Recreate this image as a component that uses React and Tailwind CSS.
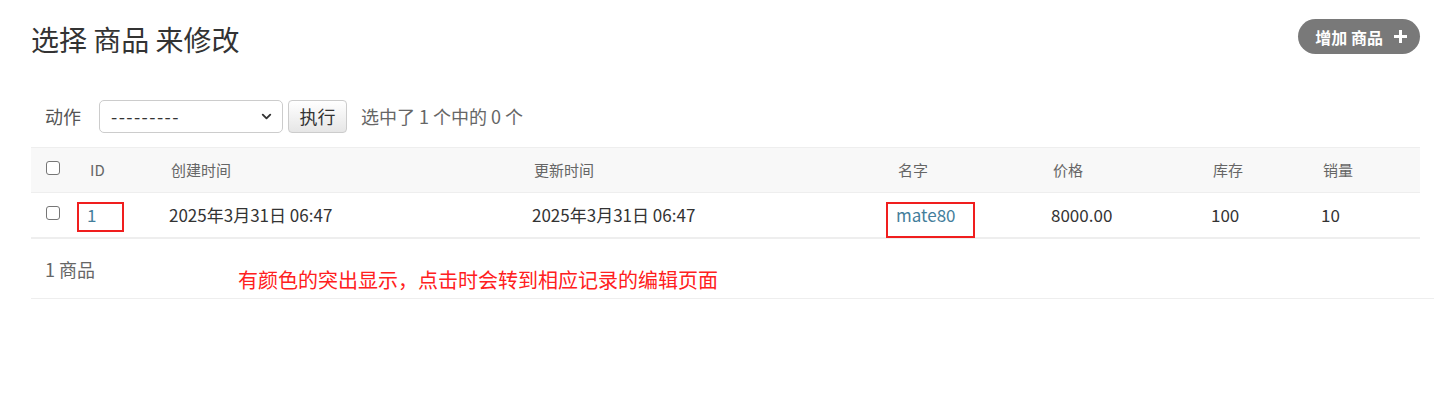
import React from 'react';
import { ChevronDown } from 'lucide-react';

const font = { fontFamily: '"Noto Sans CJK SC", "Liberation Sans", sans-serif' };

function Checkbox() {
  return <span className="block w-[14px] h-[14px] mb-[4px] border border-[#767676] rounded-[3px] bg-white"></span>;
}

const headers = ['ID', '创建时间', '更新时间', '名字', '价格', '库存', '销量'];

export default function App() {
  return (
    <div className="bg-white w-[1434px] h-[418px] text-[#333]" style={font}>
      {/* header */}
      <div className="flex items-start justify-between pl-[31px] pr-[14px] pt-[19px]">
        <h1 className="text-[28px] leading-[42px] font-normal text-[#333] -mt-[1px]">选择 商品 来修改</h1>
        <a className="flex items-center gap-[11px] h-[35px] pl-[17px] pr-[13px] rounded-full bg-[#797979] text-white text-[16px] font-semibold">
          增加 商品
          <svg width="13" height="13" viewBox="0 0 13 13">
            <path d="M6.5 0v13M0 6.5h13" stroke="white" strokeWidth="3" />
          </svg>
        </a>
      </div>

      {/* actions */}
      <div className="flex items-center mt-[40px] pl-[45px] h-[33px] text-[18px]">
        <span className="text-[#555]">动作</span>
        <div className="ml-[18px] flex items-center justify-between w-[184px] h-[33px] border border-[#ccc] rounded-[5px] pl-[11px] pr-[8px] text-[#333]">
          <span className="tracking-[1.4px]">---------</span>
          <ChevronDown className="w-[15px] h-[15px]" strokeWidth={3} />
        </div>
        <button className="ml-[5px] h-[33px] w-[59px] border border-[#ccc] rounded-[4px] bg-gradient-to-b from-white to-[#e6e6e6] text-[#333]">执行</button>
        <span className="ml-[14px] text-[#666]">选中了 1 个中的 0 个</span>
      </div>

      {/* table */}
      <div className="pl-[31px] pr-[14px] mt-[14px]">
        <table className="w-[1389px] table-fixed border-collapse">
          <colgroup>
            <col className="w-[48px]" />
            <col className="w-[82px]" />
            <col className="w-[363px]" />
            <col className="w-[364px]" />
            <col className="w-[155px]" />
            <col className="w-[160px]" />
            <col className="w-[110px]" />
            <col className="w-[107px]" />
          </colgroup>
          <thead>
            <tr className="bg-[#f8f8f8] border-t border-[#eee] border-b h-[45px]">
              <th className="pl-[15px] text-left font-normal"><Checkbox /></th>
              {headers.map((h, i) => (
                <th key={h} className={`${i === 0 ? 'pl-[11px]' : 'pl-[10px]'} text-left text-[15px] font-normal text-[#666]`}>{h}</th>
              ))}
            </tr>
          </thead>
          <tbody>
            <tr className="h-[45px] border-b-2 border-[#eee] text-[17px] text-[#333]">
              <td className="pl-[15px]"><Checkbox /></td>
              <td className="relative pl-[8px]">
                <span className="text-[#447e9b]">1</span>
                <span className="absolute left-[-2px] top-[9px] w-[47px] h-[30px] border-2 border-[#f01e1e]"></span>
              </td>
              <td className="pl-[8px]">2025年3月31日 06:47</td>
              <td className="pl-[8px]">2025年3月31日 06:47</td>
              <td className="relative pl-[8px]">
                <span className="text-[#447e9b]">mate80</span>
                <span className="absolute left-[-2px] top-[9px] w-[89px] h-[36px] border-2 border-[#f01e1e]"></span>
              </td>
              <td className="pl-[8px]">8000.00</td>
              <td className="pl-[8px]">100</td>
              <td className="pl-[8px]">10</td>
            </tr>
          </tbody>
        </table>
      </div>

      {/* footer */}
      <div className="ml-[31px] flex items-start h-[60px] border-b border-[#eee] pl-[14px] pt-[17px]">
        <span className="text-[18px] text-[#666] leading-[26px]">1 商品</span>
        <span className="ml-[143px] mt-[10px] text-[20px] text-[#ff2020] leading-[28px]">有颜色的突出显示，点击时会转到相应记录的编辑页面</span>
      </div>
    </div>
  );
}
